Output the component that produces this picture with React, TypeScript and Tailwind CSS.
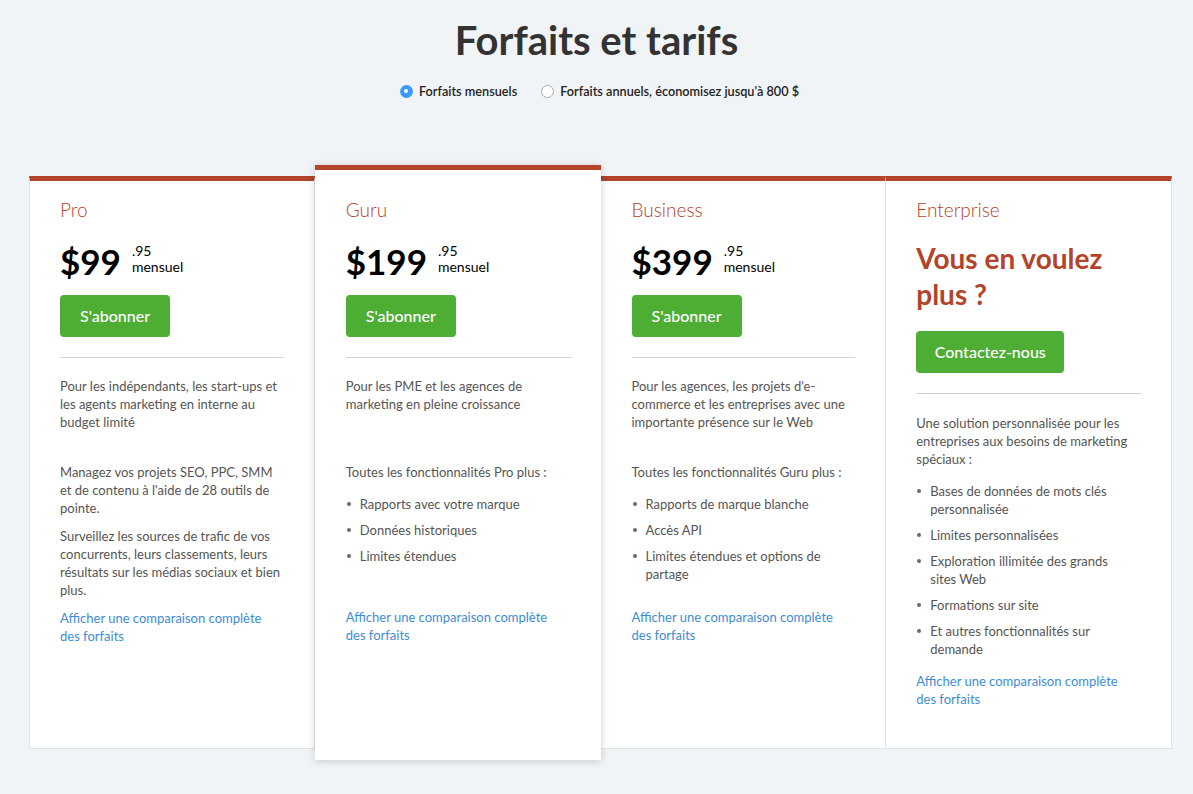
import React from 'react';

const RED = 'text-[#b3432b]';

const Dot = () => <span className="mt-[7px] mr-[9px] ml-[1px] h-[4px] w-[4px] shrink-0 rounded-full bg-[#6b6b6b]" />;

const FeatureList = ({ items }: { items: string[] }) => (
  <ul className="flex flex-col gap-[8px]">
    {items.map((it) => (
      <li key={it} className="flex items-start">
        <Dot />
        <span className="max-w-[200px]">{it}</span>
      </li>
    ))}
  </ul>
);

const CompareLink = () => (
  <a href="#" className="block max-w-[214px] text-[#3d8cd8]">
    Afficher une comparaison complète des forfaits
  </a>
);

const GreenButton = ({ label, width }: { label: string; width: string }) => (
  <button className={`h-[42px] ${width} rounded-[4px] bg-[#4eae34] text-[16px] font-medium text-white`}>{label}</button>
);

const Price = ({ amount }: { amount: string }) => (
  <div className="mt-[19px] flex items-start">
    <span className="text-[35px] font-bold leading-[40px] text-black">{amount}</span>
    <div className="ml-[11px] mt-[2px] flex flex-col text-[14px] leading-[16px] text-black">
      <span>.95</span>
      <span>mensuel</span>
    </div>
  </div>
);

export default function App() {
  return (
    <div className="min-h-screen bg-[#f1f4f6] pb-[40px] font-['Lato',sans-serif] text-[13px] leading-[18px] text-[#555]">
      <h1 className="pt-[17px] text-center text-[40px] font-bold leading-[46px] text-[#333]">Forfaits et tarifs</h1>

      <div className="mt-[19px] flex items-center justify-center gap-[24px] pl-[6px] text-[12.7px] font-semibold text-[#222]">
        <label className="flex items-center gap-[6px]">
          <span className="flex h-[13px] w-[13px] items-center justify-center rounded-full bg-[#3b99fc]">
            <span className="h-[4px] w-[4px] rounded-full bg-white" />
          </span>
          Forfaits mensuels
        </label>
        <label className="flex items-center gap-[6px]">
          <span className="h-[13px] w-[13px] rounded-full border border-[#a9a9a9] bg-white" />
          Forfaits annuels, économisez jusqu'à 800 $
        </label>
      </div>

      <div className="ml-[29px] mt-[76px] grid w-[1143px] grid-cols-4">
        {/* Pro */}
        <div className="flex flex-col border-x border-b border-x-[#e1e4e7] border-b-[#e1e4e7] border-t-[5px] border-t-[#b3432b] bg-white pb-[40px] pl-[30px] pr-[30px] pt-[17px]">
          <h3 className={`text-[19px] font-light leading-[24px] ${RED}`}>Pro</h3>
          <Price amount="$99" />
          <div className="mt-[14px]">
            <GreenButton label="S'abonner" width="w-[110px]" />
          </div>
          <hr className="mt-[20px] border-[#d9d2d2]" />
          <p className="mt-[19px] min-h-[86px]">Pour les indépendants, les start-ups et les agents marketing en interne au budget limité</p>
          <div className="min-h-[146px]">
            <p className="mb-[10px]">Managez vos projets SEO, PPC, SMM et de contenu à l'aide de 28 outils de pointe.</p>
            <p className="mb-[10px]">Surveillez les sources de trafic de vos concurrents, leurs classements, leurs résultats sur les médias sociaux et bien plus.</p>
          </div>
          <CompareLink />
        </div>

        {/* Guru */}
        <div className="relative z-10 -my-[11px] flex flex-col border-t-[5px] border-t-[#b3432b] bg-white pb-[40px] pl-[31px] pr-[30px] pt-[28px] shadow-[0_1px_8px_rgba(0,0,0,0.18)]">
          <h3 className={`text-[19px] font-light leading-[24px] ${RED}`}>Guru</h3>
          <Price amount="$199" />
          <div className="mt-[14px]">
            <GreenButton label="S'abonner" width="w-[110px]" />
          </div>
          <hr className="mt-[20px] border-[#d9d2d2]" />
          <p className="mt-[19px] min-h-[86px]">Pour les PME et les agences de marketing en pleine croissance</p>
          <div className="min-h-[145px]">
            <p className="mb-[14px]">Toutes les fonctionnalités Pro plus :</p>
            <FeatureList items={['Rapports avec votre marque', 'Données historiques', 'Limites étendues']} />
          </div>
          <CompareLink />
        </div>

        {/* Business */}
        <div className="flex flex-col border-r border-b border-r-[#e1e4e7] border-b-[#e1e4e7] border-t-[5px] border-t-[#b3432b] bg-white pb-[40px] pl-[31px] pr-[30px] pt-[17px]">
          <h3 className={`text-[19px] font-light leading-[24px] ${RED}`}>Business</h3>
          <Price amount="$399" />
          <div className="mt-[14px]">
            <GreenButton label="S'abonner" width="w-[110px]" />
          </div>
          <hr className="mt-[20px] border-[#d9d2d2]" />
          <p className="mt-[19px] min-h-[86px]">Pour les agences, les projets d'e-commerce et les entreprises avec une importante présence sur le Web</p>
          <div className="min-h-[145px]">
            <p className="mb-[14px]">Toutes les fonctionnalités Guru plus :</p>
            <FeatureList items={['Rapports de marque blanche', 'Accès API', 'Limites étendues et options de partage']} />
          </div>
          <CompareLink />
        </div>

        {/* Enterprise */}
        <div className="flex flex-col border-r border-b border-r-[#e1e4e7] border-b-[#e1e4e7] border-t-[5px] border-t-[#b3432b] bg-white pb-[40px] pl-[30px] pr-[30px] pt-[17px]">
          <h3 className={`text-[19px] font-light leading-[24px] ${RED}`}>Enterprise</h3>
          <h2 className={`mt-[18px] text-[28px] font-bold leading-[36px] ${RED}`}>Vous en voulez plus ?</h2>
          <div className="mt-[19px]">
            <GreenButton label="Contactez-nous" width="w-[148px]" />
          </div>
          <hr className="mt-[20px] border-[#d9d2d2]" />
          <p className="mt-[20px] mb-[14px]">Une solution personnalisée pour les entreprises aux besoins de marketing spéciaux :</p>
          <div className="mb-[14px]">
            <FeatureList
              items={[
                'Bases de données de mots clés personnalisée',
                'Limites personnalisées',
                'Exploration illimitée des grands sites Web',
                'Formations sur site',
                'Et autres fonctionnalités sur demande',
              ]}
            />
          </div>
          <CompareLink />
        </div>
      </div>
    </div>
  );
}
